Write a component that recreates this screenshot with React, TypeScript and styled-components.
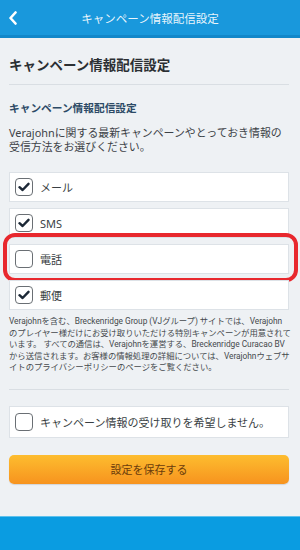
import React from "react";
import styled, { createGlobalStyle } from "styled-components";

const Global = createGlobalStyle`
  html, body { margin: 0; padding: 0; background: #eef1f4; }
  body { font-family: "Noto Sans", "Noto Sans CJK JP", sans-serif; color: #333; }
  * { box-sizing: border-box; }
`;

const Page = styled.div`
  width: 300px;
  height: 550px;
  overflow: hidden;
  display: flex;
  flex-direction: column;
  background: #eef1f4;
`;

const Header = styled.header`
  height: 38px;
  flex: none;
  background: #1998dc;
  border-bottom: 3px solid #1287c9;
  display: grid;
  grid-template-columns: 40px 1fr 40px;
  align-items: center;
`;

const Back = styled.div`
  display: flex;
  align-items: center;
  padding-left: 8px;
  padding-top: 1px;
`;

const HeaderTitle = styled.div`
  text-align: center;
  color: rgba(255, 255, 255, 0.92);
  font-size: 11.5px;
  font-family: "Noto Sans CJK JP", sans-serif;
`;

const Main = styled.main`
  flex: none;
  padding: 0 11px 0 9px;
  display: flex;
  flex-direction: column;
`;

const Title = styled.h1`
  margin: 16px 0 0;
  font-size: 13.5px;
  line-height: 20px;
  font-weight: 700;
  color: #2b2f33;
  font-family: "Noto Sans CJK JP", sans-serif;
`;

const Divider = styled.hr<{ $top: number }>`
  margin: ${(p) => p.$top}px 0 0;
  border: none;
  height: 1px;
  background: #d9dee3;
`;

const SubTitle = styled.h2`
  margin: 15px 0 0;
  font-size: 10.7px;
  line-height: 16px;
  font-weight: 700;
  color: #2c4a66;
  font-family: "Noto Sans CJK JP", sans-serif;
`;

const Description = styled.p`
  margin: 10px 0 0;
  font-size: 10.9px;
  line-height: 14px;
  color: #3d4247;
`;

const Options = styled.div<{ $top: number }>`
  margin-top: ${(p) => p.$top}px;
  display: flex;
  flex-direction: column;
  gap: 6px;
`;

const Row = styled.label<{ $h?: number }>`
  position: relative;
  height: ${(p) => p.$h ?? 30}px;
  background: #fff;
  border: 1px solid #dde2e7;
  display: flex;
  align-items: center;
  gap: 7px;
  padding-left: 5px;
  font-size: 11px;
  color: #3a3f44;
`;

const Box = styled.span`
  width: 18px;
  height: 18px;
  flex: none;
  border: 1.5px solid #6a6f74;
  border-radius: 4px;
  background: #fff;
  display: flex;
  align-items: center;
  justify-content: center;
`;

const Highlight = styled.span`
  position: absolute;
  left: -7px;
  right: -10px;
  top: -12px;
  bottom: -9px;
  border: 4.5px solid #e8282e;
  border-radius: 12px;
  pointer-events: none;
`;

const Disclaimer = styled.p`
  margin: 6px 0 0;
  font-family: "Roboto", "Noto Sans CJK JP", sans-serif;
  font-size: 8.35px;
  line-height: 11.6px;
  letter-spacing: -0.03px;
  color: #45494d;
`;

const DisclaimerLine = styled.span`
  display: block;
  white-space: nowrap;
`;

const SaveButton = styled.button`
  margin-top: 17px;
  height: 29px;
  width: 100%;
  border: none;
  border-radius: 5px;
  background: linear-gradient(#fdbd2f, #f7931e);
  box-shadow: 0 1px 1px rgba(0, 0, 0, 0.12);
  color: #6a3c0c;
  font-size: 11px;
  font-family: "Noto Sans CJK JP", sans-serif;
  display: flex;
  align-items: center;
  justify-content: center;
`;

const Footer = styled.footer`
  margin-top: 32px;
  flex: 1;
  background: #0a9ce1;
  border-top: 1px solid #5ec1ec;
`;

const Check = () => (
  <svg width="12" height="10" viewBox="0 0 12 10">
    <path d="M1.5 5.2 L4.6 8 L10.5 1.8" fill="none" stroke="#1c2836" strokeWidth="2.4" strokeLinecap="round" strokeLinejoin="round" />
  </svg>
);

const Checkbox = ({ checked }: { checked: boolean }) => <Box>{checked ? <Check /> : null}</Box>;

const options = [
  { label: "メール", checked: true },
  { label: "SMS", checked: true },
  { label: "電話", checked: false, highlight: true },
  { label: "郵便", checked: true },
];

const disclaimerLines = [
  "Verajohnを含む、Breckenridge Group (VJグループ) サイトでは、Verajohn",
  "のプレイヤー様だけにお受け取りいただける特別キャンペーンが用意されて",
  "います。 すべての通信は、Verajohnを運営する、Breckenridge Curacao BV",
  "から送信されます。お客様の情報処理の詳細については、Verajohnウェブサ",
  "イトのプライバシーポリシーのページをご覧ください。",
];

export default function App() {
  return (
    <>
      <Global />
      <Page>
        <Header>
          <Back>
            <svg width="10" height="14" viewBox="0 0 10 14">
              <path d="M7.5 1.5 L2.5 7 L7.5 12.5" fill="none" stroke="#fff" strokeWidth="2.6" strokeLinecap="round" strokeLinejoin="round" />
            </svg>
          </Back>
          <HeaderTitle>キャンペーン情報配信設定</HeaderTitle>
          <span />
        </Header>
        <Main>
          <Title>キャンペーン情報配信設定</Title>
          <Divider $top={10} />
          <SubTitle>キャンペーン情報配信設定</SubTitle>
          <Description>
            Verajohnに関する最新キャンペーンやとっておき情報の受信方法をお選びください。
          </Description>
          <Options $top={18}>
            {options.map((o) => (
              <Row key={o.label}>
                <Checkbox checked={o.checked} />
                {o.label}
                {o.highlight ? <Highlight /> : null}
              </Row>
            ))}
          </Options>
          <Disclaimer>
            {disclaimerLines.map((line) => (
              <DisclaimerLine key={line}>{line}</DisclaimerLine>
            ))}
          </Disclaimer>
          <Divider $top={15} />
          <Options $top={16}>
            <Row $h={32}>
              <Checkbox checked={false} />
              キャンペーン情報の受け取りを希望しません。
            </Row>
          </Options>
          <SaveButton>設定を保存する</SaveButton>
        </Main>
        <Footer />
      </Page>
    </>
  );
}
